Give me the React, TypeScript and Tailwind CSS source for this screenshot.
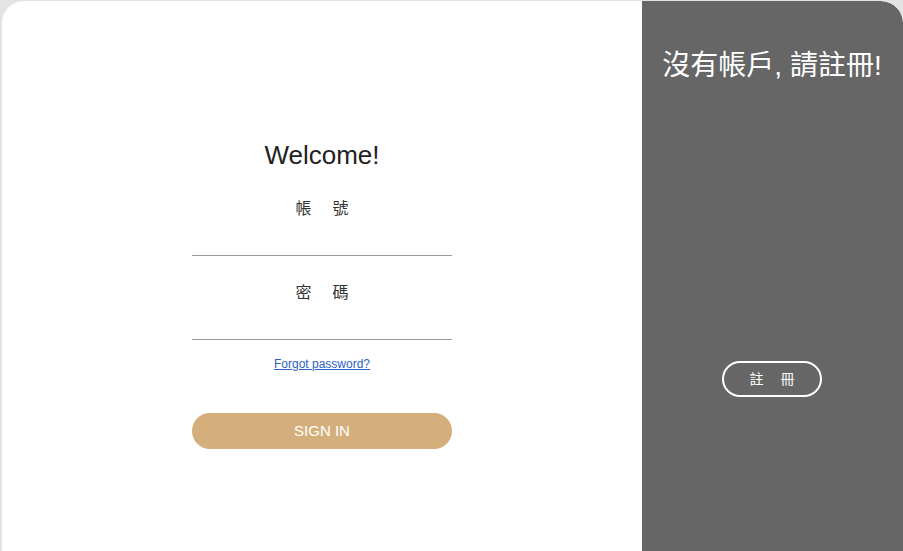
export default function App() {
  return (
    <div
      className="min-h-screen overflow-hidden bg-[#e4e4e4] pl-[2px] pt-[1px]"
      style={{ fontFamily: '"Liberation Sans", "Noto Sans CJK TC", sans-serif' }}
    >
      <div className="flex h-[560px] w-[901px] overflow-hidden rounded-t-[22px] bg-white">
        {/* sign in */}
        <section className="flex w-[640px] flex-col items-center pt-[139px]">
          <h1 className="text-[26px] leading-[30px] text-[#222]">Welcome!</h1>

          <label className="mt-[27px] flex h-[24px] w-[260px] justify-center gap-[21px] text-[16px] leading-[24px] text-[#333]">
            <span>帳</span>
            <span>號</span>
          </label>
          <input
            type="text"
            className="h-[35px] w-[260px] border-b border-[#999] bg-transparent text-[14px] outline-none"
          />

          <label className="mt-[25px] flex h-[24px] w-[260px] justify-center gap-[21px] text-[16px] leading-[24px] text-[#333]">
            <span>密</span>
            <span>碼</span>
          </label>
          <input
            type="password"
            className="h-[35px] w-[260px] border-b border-[#999] bg-transparent text-[14px] outline-none"
          />

          <a
            href="#"
            className="mt-[16px] text-[12px] leading-[16px] text-[#2a62c4] underline"
          >
            Forgot password?
          </a>

          <button
            type="button"
            className="mt-[41px] h-[36px] w-[260px] rounded-full bg-[#d4af7b] text-[15px] uppercase text-white"
          >
            Sign in
          </button>
        </section>

        {/* register */}
        <section className="flex flex-1 flex-col items-center rounded-tr-[22px] bg-[#666666] pr-[1px] pt-[47px]">
          <h2 className="whitespace-nowrap text-[28px] leading-[36px] text-white">
            沒有帳戶, 請註冊!
          </h2>
          <button
            type="button"
            className="mt-[277px] flex h-[36px] w-[100px] items-center justify-center gap-[17px] rounded-full border-2 border-white text-[14px] text-white"
          >
            <span>註</span>
            <span>冊</span>
          </button>
        </section>
      </div>
    </div>
  );
}
